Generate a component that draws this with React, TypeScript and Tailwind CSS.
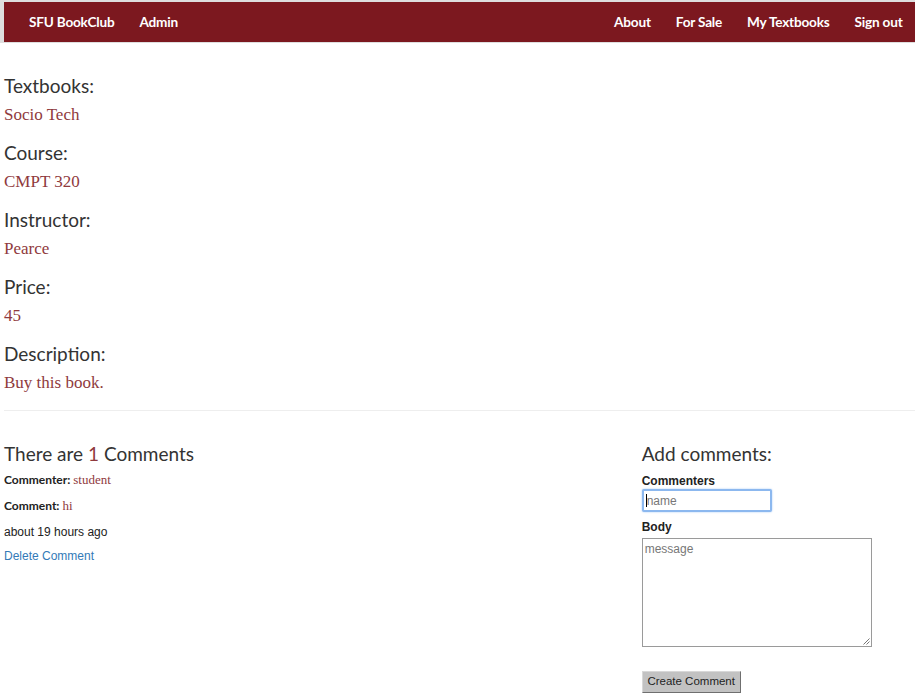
import React from "react";

const lato = { fontFamily: "Lato, 'Open Sans', sans-serif" };

function Field({ label, value }: { label: string; value: string }) {
  return (
    <div className="flex flex-col">
      <h3 className="text-[19px] leading-[22px] text-[#333] font-normal" style={lato}>
        {label}
      </h3>
      <p className="mt-[7px] text-[17px] leading-[22px] text-[#8f3a3d] font-['Liberation_Serif',serif]">
        {value}
      </p>
    </div>
  );
}

export default function App() {
  const navItem = "px-[12.5px] text-[13.6px] font-bold text-white tracking-[-0.2px]";
  return (
    <div className="min-h-[696px] w-[915px] bg-white">
      <nav
        className="flex h-[43px] items-center justify-between border-l-4 border-t-2 border-b border-[#dedede] bg-[#7c181f] pt-[1px]"
        style={lato}
      >
        <div className="flex items-center pl-[12.5px]">
          <span className={navItem}>SFU BookClub</span>
          <span className={navItem}>Admin</span>
        </div>
        <div className="flex items-center">
          <span className={navItem}>About</span>
          <span className={navItem}>For Sale</span>
          <span className={navItem}>My Textbooks</span>
          <span className={navItem}>Sign out</span>
        </div>
      </nav>

      <div className="pl-1">
        <div className="flex flex-col gap-[16px] pt-[32px]">
          <Field label="Textbooks:" value="Socio Tech" />
          <Field label="Course:" value="CMPT 320" />
          <Field label="Instructor:" value="Pearce" />
          <Field label="Price:" value="45" />
          <Field label="Description:" value="Buy this book." />
        </div>

        <hr className="mt-[16px] border-0 border-t border-[#eeeeee]" />

        <div className="flex pt-[32px]">
          <div className="w-[70%]">
            <h3 className="text-[19px] leading-[22px] text-[#333]" style={lato}>
              There are <span className="text-[#8f3a3d]">1</span> Comments
            </h3>
            <div className="mt-[6px] flex flex-col text-[12px] leading-[17px] text-[#222]">
              <p>
                <span className="font-bold" style={lato}>Commenter: </span>
                <span className="text-[13px] text-[#8f3a3d] font-['Liberation_Serif',serif]">student</span>
              </p>
              <p className="mt-[9px]">
                <span className="font-bold" style={lato}>Comment: </span>
                <span className="text-[13px] text-[#8f3a3d] font-['Liberation_Serif',serif]">hi</span>
              </p>
              <p className="mt-[10px] font-['Liberation_Sans',sans-serif]">about 19 hours ago</p>
              <p className="mt-[7px] font-['Liberation_Sans',sans-serif] text-[#337ab7]">Delete Comment</p>
            </div>
          </div>
          <div className="w-[30%] font-['Liberation_Sans',sans-serif]">
            <h3 className="text-[19px] leading-[22px] text-[#333]" style={lato}>
              Add comments:
            </h3>
            <div className="mt-[9px] text-[12px] font-bold leading-[15px] text-[#222]">Commenters</div>
            <div className="flex h-[23px] w-[130px] items-center rounded-[2px] border-2 border-[#8cb8ef] bg-white px-[2px] shadow-[0_0_2px_#9ec5f5]">
              <span className="h-[13px] w-px bg-black" />
              <span className="text-[12px] text-[#777]">name</span>
            </div>
            <div className="mt-[8px] text-[12px] font-bold leading-[15px] text-[#222]">Body</div>
            <div className="relative mt-[3px] h-[109px] w-[230px] border border-[#9a9a9a] bg-white px-[2px] pt-[2px]">
              <span className="block text-[12px] leading-[16px] text-[#777]">message</span>
              <svg className="absolute bottom-[1px] right-[1px]" width="7" height="7" viewBox="0 0 7 7">
                <path d="M6.5 0.5 L0.5 6.5 M6.5 3.5 L3.5 6.5" stroke="#777" strokeWidth="1" />
              </svg>
            </div>
            <button className="mt-[24px] h-[22px] w-[99px] border border-t-[#d8d8d8] border-l-[#d8d8d8] border-r-[#6f6f6f] border-b-[#6f6f6f] bg-[#c2c2c2] text-[11.5px] text-[#222]">
              Create Comment
            </button>
          </div>
        </div>
      </div>
    </div>
  );
}
